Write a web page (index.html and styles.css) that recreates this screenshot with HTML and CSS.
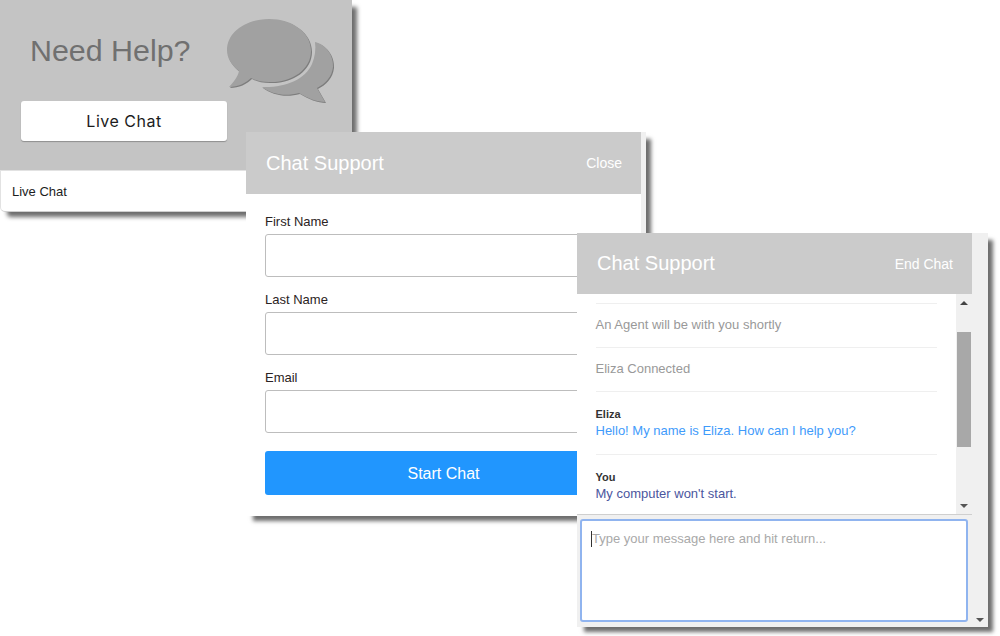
FILE: index.html
```html
<!DOCTYPE html>
<html lang="en">
<head>
<meta charset="utf-8">
<title>Live Chat</title>
<link rel="stylesheet" href="styles.css">
</head>
<body>
<section class="window help">
  <div class="help-top">
    <div class="help-main">
      <h1>Need Help?</h1>
      <button class="live-btn">Live Chat</button>
    </div>
    <svg class="bubbles" viewBox="0 0 108 86" width="108" height="86" aria-hidden="true">
      <path class="back" d="M88 24C98 26 107 37 106 49C105 59 98 66 90 70L98 84C90 84 80 80 72 75C58 79 44 76 35 69C57 70 78 62 85 46C88 39 89 31 88 24Z"/>
      <path class="front" d="M42 1C65 1 84 14 84 33C84 52 64 65 42 64C35 64 29 63 24 60C19 65 11 69 2 69C7 64 11 58 12 53C4 47 0 40 0 32C0 14 19 1 42 1Z"/>
    </svg>
  </div>
  <div class="help-foot">Live Chat</div>
</section>

<section class="window form-win">
  <header class="bar"><span class="bar-title">Chat Support</span><span class="bar-link">Close</span></header>
  <form class="form">
    <label>First Name</label><div class="field"></div>
    <label>Last Name</label><div class="field"></div>
    <label>Email</label><div class="field"></div>
    <div class="start">Start Chat</div>
  </form>
</section>

<section class="window chat-win">
  <div class="chat-main">
    <header class="bar"><span class="bar-title">Chat Support</span><span class="bar-link">End Chat</span></header>
    <div class="log-wrap">
      <div class="log">
        <div class="msg sys">An Agent will be with you shortly</div>
        <div class="msg sys">Eliza Connected</div>
        <div class="msg who"><b>Eliza</b><span class="agent">Hello! My name is Eliza. How can I help you?</span></div>
        <div class="msg who last"><b>You</b><span class="you">My computer won't start.</span></div>
      </div>
      <div class="scroll">
        <i class="up"></i>
        <div class="thumb"></div>
        <i class="down"></i>
      </div>
    </div>
    <div class="input-wrap">
      <div class="input"><span class="caret"></span>Type your message here and hit return...</div>
    </div>
  </div>
  <div class="outer-scroll"><i class="down"></i></div>
</section>
</body>
</html>
```
FILE: styles.css
```css
* { box-sizing: border-box; }
html, body { margin: 0; padding: 0; }
body {
  position: relative;
  width: 1000px;
  height: 636px;
  overflow: hidden;
  background: #fff;
  font-family: "Liberation Sans", Arial, sans-serif;
}
.window {
  position: absolute;
  background: #fff;
  box-shadow: 6px 6px 4px -1px #6e6e6e;
}
.help { left: 0; top: 0; width: 352px; height: 212px; border-radius: 0 0 5px 5px; }
.help-top {
  height: 170px;
  background: #c4c4c4;
  display: flex;
  align-items: flex-start;
}
.help-main { width: 227px; padding: 32px 0 0 21px; flex: none; }
h1 {
  margin: 0;
  font-weight: 400;
  font-size: 30.4px;
  line-height: 37px;
  color: #707070;
  padding-left: 9px;
}
.live-btn {
  display: block;
  width: 206px;
  height: 40px;
  margin-top: 32px;
  border: 0;
  border-radius: 3px;
  background: #fff;
  box-shadow: 0 1px 1px #8f8f8f;
  font-family: "Inter", sans-serif;
  font-size: 16px;
  font-weight: 400;
  letter-spacing: .5px;
  color: #1c1c1c;
}
.bubbles { flex: none; margin-top: 18px; overflow: visible; filter: drop-shadow(1px 1px 0 #7d7d7d); }
.front, .back { fill: #a1a1a1; }
.help-foot {
  height: 42px;
  padding: 13px 11px 0;
  font-size: 13px;
  line-height: 16px;
  color: #1d1d1d;
  border: 1px solid #e2e2e2;
  border-bottom-color: #cfcfcf;
  border-radius: 0 0 5px 5px;
}
.form-win { left: 246px; top: 132px; width: 400px; height: 384px; border-right: 5px solid #f0f0f0; }
.bar {
  height: 62px;
  background: #cbcbcb;
  display: flex;
  align-items: center;
  justify-content: space-between;
  padding: 0 19px 0 20px;
  color: #fff;
}
.bar-title { font-size: 20px; }
.bar-link { font-size: 14px; }
.form { padding: 20px 19px 0; }
.form label { display: block; font-size: 13px; line-height: 16px; color: #2b2323; padding-left: 0; }
.field {
  height: 43px;
  margin: 4px 0 15px;
  border: 1px solid #bdbdbd;
  border-radius: 3px;
  background: #fff;
}
.start {
  margin-top: 18px;
  height: 44px;
  border-radius: 3px;
  background: #2196fe;
  color: #fff;
  font-size: 16px;
  line-height: 45px;
  text-align: center;
}
.chat-win {
  left: 577px;
  top: 233px;
  width: 411px;
  height: 394px;
  display: flex;
  background: #f0f0f0;
}
.chat-main { width: 395px; flex: none; display: flex; flex-direction: column; }
.log-wrap { height: 221px; display: flex; background: #fff; border-bottom: 1px solid #cfcfcf; }
.log { width: 379px; flex: none; padding: 9px 19px 0 18.5px; }
.msg { border-top: 1px solid #efefef; font-size: 13px; }
.sys { height: 44px; line-height: 42px; color: #999; font-size: 13px; }
.who { height: 63px; padding-top: 15px; line-height: 16px; }
.who.last { border-top: 1px solid #efefef; }
.who b { display: block; font-size: 11px; line-height: 14px; color: #333; }
.who span { display: block; font-size: 13px; line-height: 20px; }
.agent { color: #3f9bfb; }
.you { color: #4b569e; }
.scroll { width: 16px; flex: none; background: #f0f0f0; position: relative; }
.thumb { position: absolute; left: 1px; right: 1px; top: 38px; height: 115px; background: #a8a8a8; }
.up, .down { position: absolute; width: 0; height: 0; border-left: 4px solid transparent; border-right: 4px solid transparent; }
.up { top: 7px; left: 4px; border-bottom: 4px solid #444; }
.scroll .down { bottom: 6px; left: 4px; border-top: 4px solid #555; }
.input-wrap { padding: 4px 4px 5px 3px; flex: 1; background: #f0f0f0; }
.input {
  position: relative;
  width: 388px;
  height: 103px;
  border: 2px solid #90b4ef;
  border-radius: 3px;
  background: #fff;
  padding: 9px 0 0 10px;
  font-size: 13px;
  line-height: 18px;
  color: #a9a9a9;
}
.caret { position: absolute; left: 9px; top: 10px; width: 1px; height: 16px; background: #333; }
.outer-scroll { width: 16px; flex: none; position: relative; background: #f0f0f0; }
.outer-scroll .down { bottom: 5px; left: 4px; border-top: 4px solid #555; }
```
